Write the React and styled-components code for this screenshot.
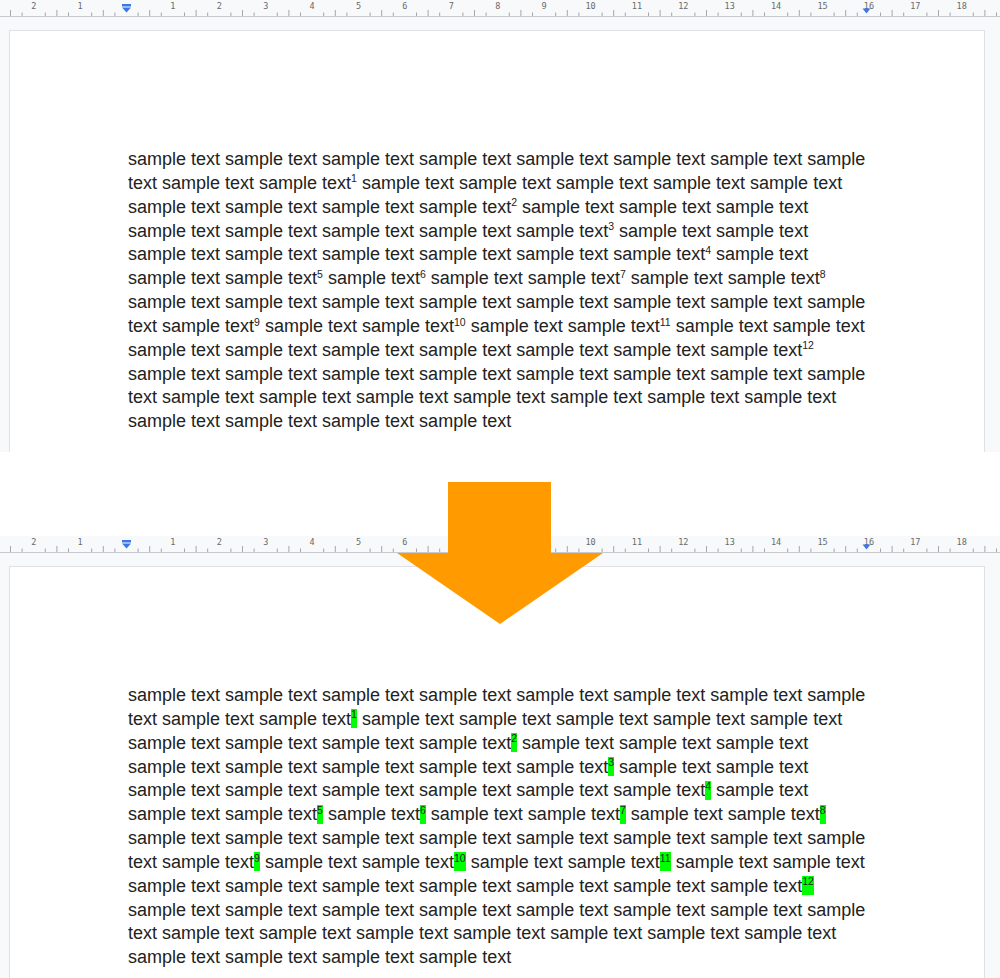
import React from "react";
import styled, { createGlobalStyle } from "styled-components";

const CM = 46.4;
const ORIGIN = 126.5;

const LINES = [
  "sample text sample text sample text sample text sample text sample text sample text sample",
  "text sample text sample text^1 sample text sample text sample text sample text sample text",
  "sample text sample text sample text sample text^2 sample text sample text sample text",
  "sample text sample text sample text sample text sample text^3 sample text sample text",
  "sample text sample text sample text sample text sample text sample text^4 sample text",
  "sample text sample text^5 sample text^6 sample text sample text^7 sample text sample text^8",
  "sample text sample text sample text sample text sample text sample text sample text sample",
  "text sample text^9 sample text sample text^10 sample text sample text^11 sample text sample text",
  "sample text sample text sample text sample text sample text sample text sample text^12",
  "sample text sample text sample text sample text sample text sample text sample text sample",
  "text sample text sample text sample text sample text sample text sample text sample text",
  "sample text sample text sample text sample text",
];

const GlobalStyle = createGlobalStyle`
  body {
    margin: 0;
    background: #ffffff;
  }
`;

const Stage = styled.div`
  position: relative;
  width: 1000px;
  height: 978px;
  overflow: hidden;
`;

const Shot = styled.section`
  height: ${({ $height }) => $height}px;
  margin-bottom: ${({ $gap }) => $gap || 0}px;
  background: #f8f9fa;
  overflow: hidden;
`;

const RulerBar = styled.div`
  height: 16px;
  border-bottom: 1px solid #c7c9cc;
  background: #f8f9fa;
`;

const PageArea = styled.div`
  padding: 13px 15px 0 9px;
`;

const Page = styled.div`
  background: #ffffff;
  border: 1px solid #dfe1e5;
  border-bottom: none;
  height: 600px;
  padding: 117px 0 0 118px;
  box-sizing: border-box;
`;

const Body = styled.p`
  margin: 0;
  font-family: "Liberation Sans", Arial, sans-serif;
  font-size: 18px;
  line-height: 23.85px;
  color: #222222;
`;

const Line = styled.span`
  display: block;
  white-space: nowrap;
`;

const Sup = styled.span`
  display: inline-block;
  height: 19px;
  box-sizing: border-box;
  padding: 0.3px 0 0;
  font-size: 10.5px;
  line-height: 1;
  vertical-align: 6.4px;
  background: ${({ $marked }) => ($marked ? "#00ff00" : "transparent")};
`;

const ArrowOverlay = styled.svg`
  position: absolute;
  left: 397px;
  top: 482px;
`;

const Ruler = () => {
  const ticks = [];
  const labels = [];
  for (let q = -11; q <= 76; q++) {
    const x = ORIGIN + (q * CM) / 4;
    if (x < 0 || x > 1000) continue;
    if (q % 4 === 0) {
      const n = Math.abs(q / 4);
      if (n !== 0) {
        labels.push(
          <text key={"l" + q} x={x} y={9} textAnchor="middle">
            {n}
          </text>
        );
      }
    } else {
      const long = q % 2 === 0;
      ticks.push(
        <line key={"t" + q} x1={x} x2={x} y1={long ? 10 : 12.5} y2={16} />
      );
    }
  }
  return (
    <RulerBar>
      <svg width="1000" height="16">
        <g stroke="#a3a6aa" strokeWidth="1">{ticks}</g>
        <g
          fill="#666a6e"
          fontFamily="'DejaVu Sans Mono', monospace"
          fontSize="8.5"
        >
          {labels}
        </g>
        <rect x={ORIGIN - 4.5} y={4} width={9} height={2.5} fill="#3b78e7" />
        <polygon
          points={`${ORIGIN - 4.5},7.5 ${ORIGIN + 4.5},7.5 ${ORIGIN},12.5`}
          fill="#3b78e7"
        />
        <polygon points="862.5,8.5 870.5,8.5 866.5,13.5" fill="#3b78e7" />
      </svg>
    </RulerBar>
  );
};

const renderLine = (text, marked) =>
  text.split(/\^(\d+)/).map((part, i) =>
    i % 2 === 1 ? (
      <Sup key={i} $marked={marked}>
        {part}
      </Sup>
    ) : (
      <React.Fragment key={i}>{part}</React.Fragment>
    )
  );

const DocShot = ({ height, gap, marked }) => (
  <Shot $height={height} $gap={gap}>
    <Ruler />
    <PageArea>
      <Page>
        <Body>
          {LINES.map((text, i) => (
            <Line key={i}>{renderLine(text, marked)}</Line>
          ))}
        </Body>
      </Page>
    </PageArea>
  </Shot>
);

export default function App() {
  return (
    <>
      <GlobalStyle />
      <Stage>
        <DocShot height={452} gap={84} />
        <DocShot height={442} marked />
        <ArrowOverlay width="206" height="142" viewBox="0 0 206 142">
          <polygon
            points="51,0 154,0 154,71 206,71 103,142 0,71 51,71"
            fill="#ff9b00"
          />
        </ArrowOverlay>
      </Stage>
    </>
  );
}
